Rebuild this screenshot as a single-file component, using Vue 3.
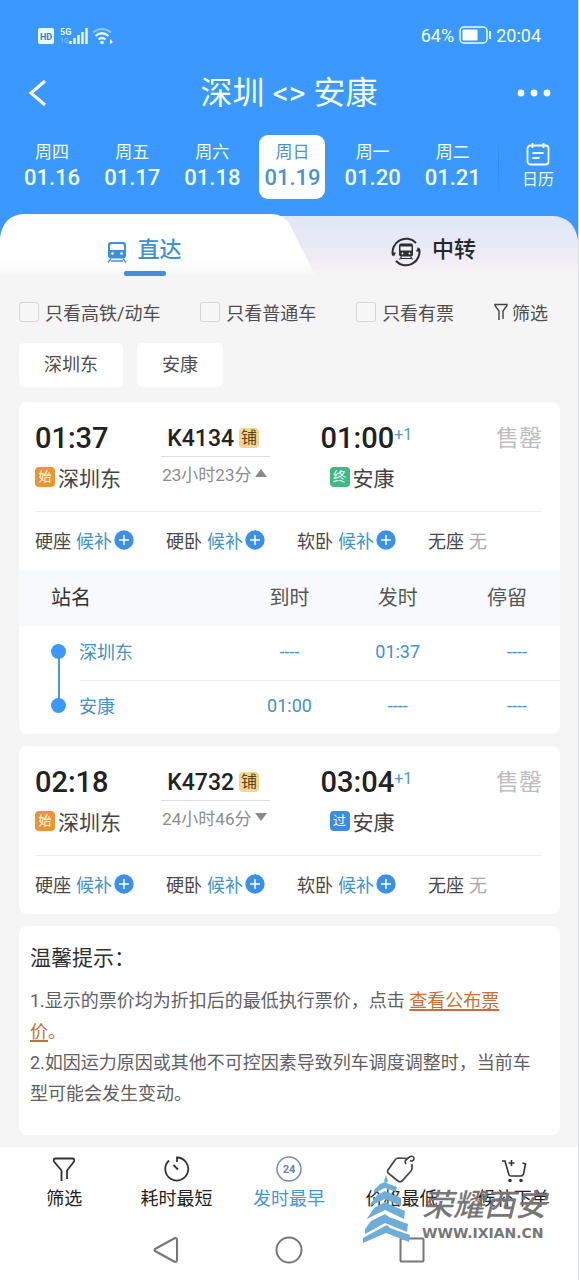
<script setup>
import { ref } from 'vue'

const days = [
  { week: '周四', date: '01.16' },
  { week: '周五', date: '01.17' },
  { week: '周六', date: '01.18' },
  { week: '周日', date: '01.19' },
  { week: '周一', date: '01.20' },
  { week: '周二', date: '01.21' },
]
const activeDay = ref('01.19')

const options = ref([
  { label: '只看高铁/动车', on: false },
  { label: '只看普通车', on: false },
  { label: '只看有票', on: false },
])

const seats = [
  { name: '硬座', wait: true },
  { name: '硬卧', wait: true },
  { name: '软卧', wait: true },
  { name: '无座', wait: false },
]

const trains = ref([
  {
    no: 'K4134', start: '01:37', end: '01:00', cost: '23小时23分', tag: '终', kind: 'last', open: true,
    stops: [
      { name: '深圳东', arrive: '----', leave: '01:37', stay: '----' },
      { name: '安康', arrive: '01:00', leave: '----', stay: '----' },
    ],
  },
  {
    no: 'K4732', start: '02:18', end: '03:04', cost: '24小时46分', tag: '过', kind: 'pass', open: false,
    stops: [],
  },
])
</script>

<template>
  <div class="page">
    <header class="top">
      <div class="status">
        <div class="status-left">
          <svg width="78" height="22" viewBox="0 0 78 22">
            <rect x="0" y="4" width="16" height="16" rx="2" fill="#e9fbff" />
            <text x="8" y="15.500" text-anchor="middle" class="hd">HD</text>
            <text x="22" y="11" class="five">5G</text>
            <text x="22" y="19" class="tiny">1G</text>
            <path d="M32.500 20v-3M36.500 20v-6M40.500 20v-9M44.500 20v-12M48.500 20v-16" stroke="#e9fbff" stroke-width="2.400" fill="none" />
            <path d="M55 8.500q9-7 18 0" stroke="#8ec6ff" stroke-width="2" fill="none" />
            <path d="M57.500 12q6.500-5.500 13 0M60.500 15.500q3.500-3 7 0" stroke="#e9fbff" stroke-width="2.200" fill="none" />
            <circle cx="64" cy="18.500" r="1.800" fill="#e9fbff" />
            <path d="M72 15v5l3-2z" fill="#e9fbff" />
          </svg>
        </div>
        <div class="status-right">
          <span>64%</span>
          <svg width="32" height="18" viewBox="0 0 32 18">
            <rect x="1" y="1" width="27" height="16" rx="4" fill="none" stroke="#e9fbff" stroke-width="1.500" />
            <rect x="3.500" y="3.500" width="15" height="11" rx="1" fill="#fff" />
            <path d="M31 5v8" stroke="#e9fbff" stroke-width="1.800" />
          </svg>
          <span>20:04</span>
        </div>
      </div>

      <div class="title-row">
        <button class="plain" aria-label="返回">
          <svg width="20" height="28" viewBox="0 0 20 28">
            <path d="M18 2 4 14l14 12" fill="none" stroke="#fff" stroke-width="3" />
          </svg>
        </button>
        <h1>深圳 &lt;&gt; 安康</h1>
        <button class="plain more" aria-label="更多">
          <svg width="34" height="8" viewBox="0 0 34 8" fill="#fff">
            <circle cx="4" cy="4" r="3.400" /><circle cx="17" cy="4" r="3.400" /><circle cx="30" cy="4" r="3.400" />
          </svg>
        </button>
      </div>

      <nav class="days">
        <div class="day-list">
          <button
            v-for="d in days" :key="d.date" class="plain day"
            :class="{ active: activeDay === d.date }" @click="activeDay = d.date"
          >
            <span class="week">{{ d.week }}</span>
            <span class="date">{{ d.date }}</span>
          </button>
        </div>
        <button class="plain calendar">
          <svg width="24" height="24" viewBox="0 0 24 24" fill="none" stroke="#fff" stroke-width="1.800">
            <rect x="1.500" y="3.500" width="21" height="19" rx="3" />
            <path d="M6.500 1v5M17.500 1v5M6.500 11h11M6.500 16h7" />
          </svg>
          <span>日历</span>
        </button>
      </nav>

      <div class="tabs">
        <svg class="tab-shape" viewBox="0 0 579 60" preserveAspectRatio="none">
          <defs>
            <linearGradient id="back" x1="0" y1="0" x2="0" y2="1">
              <stop offset="0" stop-color="#e2e8f6" />
              <stop offset=".5" stop-color="#e9e9f5" />
              <stop offset=".92" stop-color="#f6eff5" />
              <stop offset="1" stop-color="#f5f5f5" />
            </linearGradient>
            <linearGradient id="front" x1="0" y1="0" x2="0" y2="1">
              <stop offset=".75" stop-color="#fff" />
              <stop offset="1" stop-color="#f8f8f8" />
            </linearGradient>
          </defs>
          <path d="M200 2H554Q575 3 579 26V60H200z" fill="url(#back)" />
          <path d="M0 60V24Q3 1 24 0H272Q285 0 291 12L315 60z" fill="url(#front)" />
        </svg>
        <button class="plain tab current">
          <svg width="20" height="22" viewBox="0 0 20 22">
            <rect x="1" y="1" width="18" height="16.500" rx="3" fill="#3f8fe0" />
            <path d="M3 4.500Q3 3 5 3h10Q17 3 17 4.500V9H3z" fill="#fff" />
            <circle cx="5.500" cy="12.500" r="1.300" fill="#fff" /><circle cx="14.500" cy="12.500" r="1.300" fill="#fff" />
            <path d="M4 17.500 1 21.500M16 17.500l3 4M4 20h12" stroke="#3f8fe0" stroke-width="1.400" fill="none" />
          </svg>
          <span>直达</span>
        </button>
        <button class="plain tab">
          <svg width="30" height="30" viewBox="0 0 30 30">
            <path d="M2 18.500A13.500 13.500 0 0 1 25 6M28 11.500A13.500 13.500 0 0 1 5 24" fill="none" stroke="#2b2e33" stroke-width="2" />
            <path d="M.500 15.500h4.500L3 19.500zM25 14.500h4.500L27 10z" fill="#2b2e33" />
            <rect x="8" y="6.500" width="14" height="13" rx="2" fill="#2b2e33" />
            <path d="M9.500 9.500h11v4h-11z" fill="#f2f0f6" />
            <circle cx="11.500" cy="16.500" r="1" fill="#fff" /><circle cx="18.500" cy="16.500" r="1" fill="#fff" />
            <path d="m10.500 19.500-2 3M19.500 19.500l2 3M10 21.500h10" stroke="#2b2e33" stroke-width="1.200" fill="none" />
          </svg>
          <span>中转</span>
        </button>
      </div>
    </header>

    <main>
      <div class="filters">
        <label v-for="o in options" :key="o.label"><input v-model="o.on" type="checkbox">{{ o.label }}</label>
        <button class="plain sift">
          <svg width="14" height="18" viewBox="0 0 14 18" fill="none" stroke="#444" stroke-width="1.400">
            <path d="M5 17V8L1 2.500V1.500h12v1L9 8v8" />
          </svg>
          <span>筛选</span>
        </button>
      </div>

      <div class="chips">
        <button class="plain chip">深圳东</button>
        <button class="plain chip">安康</button>
      </div>

      <article v-for="t in trains" :key="t.no" class="card">
        <div class="summary">
          <div>
            <div class="time">{{ t.start }}</div>
            <div class="station"><span class="tag first">始</span>深圳东</div>
          </div>
          <div class="trip">
            <div class="number">{{ t.no }}<span class="tag berth">铺</span></div>
            <button class="plain cost" :aria-expanded="t.open" @click="t.open = !t.open">
              {{ t.cost }}
              <svg width="12" height="8" viewBox="0 0 12 8" fill="#8a8a8a">
                <path v-if="t.open" d="M6 0 12 8H0z" />
                <path v-else d="M0 0h12L6 8z" />
              </svg>
            </button>
          </div>
          <div>
            <div class="time">{{ t.end }}<sup>+1</sup></div>
            <div class="station goal"><span class="tag" :class="t.kind">{{ t.tag }}</span>安康</div>
          </div>
          <div class="sold">售罄</div>
        </div>
        <div class="seats">
          <div v-for="s in seats" :key="s.name" class="seat">
            <span>{{ s.name }}</span>
            <button v-if="s.wait" class="plain wait">
              候补
              <svg width="20" height="20" viewBox="0 0 20 20">
                <circle cx="10" cy="10" r="9.700" fill="#3b90ea" />
                <path d="M10 5v10M5 10h10" stroke="#fff" stroke-width="1.500" />
              </svg>
            </button>
            <span v-else class="none">无</span>
          </div>
        </div>
        <table v-if="t.open && t.stops.length">
          <thead>
            <tr><th class="name">站名</th><th>到时</th><th>发时</th><th class="stay">停留</th></tr>
          </thead>
          <tbody>
            <tr v-for="s in t.stops" :key="s.name">
              <td class="name"><div class="stop"><i class="dot"></i><span>{{ s.name }}</span></div></td>
              <td>{{ s.arrive }}</td><td>{{ s.leave }}</td><td class="stay">{{ s.stay }}</td>
            </tr>
          </tbody>
        </table>
      </article>

      <section class="card tips">
        <h2>温馨提示：</h2>
        <p>1.显示的票价均为折扣后的最低执行票价，点击 <a href="#">查看公布票<br>价</a><span class="stop-mark">。</span></p>
        <p>2.如因运力原因或其他不可控因素导致列车调度调整时，当前车<br>型可能会发生变动。</p>
      </section>
    </main>

    <footer>
      <nav class="sorts">
        <button class="plain sort">
          <svg width="26" height="28" viewBox="0 0 26 28" fill="none" stroke="#333" stroke-width="1.800">
            <path d="M10.500 26V15.500L3 6.500Q2 3.500 4.500 3.500h17Q24 3.500 23 6.500l-7 9V24" />
          </svg>
          <span>筛选</span>
        </button>
        <button class="plain sort">
          <svg width="26" height="28" viewBox="0 0 26 28" fill="none" stroke="#333" stroke-width="1.800">
            <path d="M13 7V2.500A11.500 11.500 0 1 1 5 5.500M9.500 10l4.500 4.500" />
          </svg>
          <span>耗时最短</span>
        </button>
        <button class="plain sort chosen">
          <svg width="26" height="28" viewBox="0 0 26 28">
            <circle cx="13" cy="14" r="12" fill="none" stroke="#7489c8" stroke-width="1.500" />
            <text x="13" y="18" text-anchor="middle" class="clock">24</text>
          </svg>
          <span>发时最早</span>
        </button>
        <button class="plain sort">
          <svg width="30" height="28" viewBox="0 0 30 28" fill="none" stroke="#444" stroke-width="1.700">
            <path d="M22 3.500 12 3Q10 3.500 9 5L2 15q-1 1.500 0 3l10 8q2 1.500 4 0l9-10q1-1 1-3V9" />
            <path d="M20 9q-2-3 1-5l3-2.500q4-1 4 2.500-1 3-4 1.500" />
          </svg>
          <span>价格最低</span>
        </button>
        <button class="plain sort">
          <svg width="26" height="28" viewBox="0 0 26 28" fill="none" stroke="#333" stroke-width="1.600">
            <path d="M1 6h3l4 14q.500 1 2 1h10q2 0 2.500-2l2-10-3-1M10.500 5v6M7.500 8h6" />
            <circle cx="9" cy="25.500" r="1" fill="#333" /><circle cx="20" cy="25.500" r="1" fill="#333" />
          </svg>
          <span>候补下单</span>
        </button>
      </nav>
      <div class="system">
        <button class="plain" aria-label="后退">
          <svg width="28" height="28" viewBox="0 0 28 28" fill="none" stroke="#777" stroke-width="2">
            <path d="M23 2 3 13q-1 1 0 2l20 11q2 0 2-2V4q0-2-2-2z" stroke-linejoin="round" />
          </svg>
        </button>
        <button class="plain" aria-label="主页">
          <svg width="28" height="28" viewBox="0 0 28 28" fill="none" stroke="#777" stroke-width="2"><circle cx="14" cy="14" r="12.500" /></svg>
        </button>
        <button class="plain" aria-label="任务">
          <svg width="28" height="28" viewBox="0 0 28 28" fill="none" stroke="#777" stroke-width="2"><rect x="2.500" y="2.500" width="23" height="23" rx="1" /></svg>
        </button>
      </div>
      <div class="brand">
        <svg width="48" height="68" viewBox="0 0 48 68" fill="#6fadd9">
          <path d="M23 0l2 6-2 2-2-2z" />
          <path d="M11 15 17 9l5-2 4 2 8 3-1 5-11-4-11 5z" />
          <path d="M8 28 14 20l8-4 4 2 12 5v8l-16-7-15 7z" />
          <path d="M5 42 11 33l11-6 4 2 16 7-1 8-19-9-18 9z" />
          <path d="M2 54 8 46l14-7 4 3 19 7-1 8-22-9L2 59z" />
          <path d="M0 63 20 52l4-2 3 3 20 7-1 7-23-9L0 68z" />
        </svg>
        <div>
          <strong>荣耀西安</strong>
          <em>WWW.IXIAN.CN</em>
        </div>
      </div>
    </footer>
  </div>
</template>

<style>
body { margin: 0; background: #f5f5f5; }
</style>

<style scoped>
.page {
  box-sizing: border-box;
  min-height: 100vh;
  border-right: 1px solid #dcdde0;
  background: #f5f5f5;
  color: #333;
  font-family: Roboto, "Noto Sans CJK SC", sans-serif;
  font-size: 18px;
}
.plain {
  margin: 0;
  padding: 0;
  border: 0;
  background: none;
  color: inherit;
  font: inherit;
  cursor: pointer;
}
svg { display: block; flex: none; }

.top { background: #3a98ff; color: #f2fdff; }
.status { display: flex; justify-content: space-between; align-items: center; height: 70px; padding: 0 37px 0 38px; }
.status-right { display: flex; align-items: center; gap: 5px; }
.hd { font: 700 9px Roboto, sans-serif; fill: #3a7fc8; }
.five { font: 700 9px Roboto, sans-serif; fill: #e9fbff; }
.tiny { font: 400 7px Roboto, sans-serif; fill: #8ec6ff; }
.title-row { display: grid; grid-template-columns: 1fr auto 1fr; align-items: center; height: 46px; padding: 0 27px; }
.more { justify-self: end; }
h1 { margin: 0; font-size: 32px; font-weight: 400; line-height: 46px; }
.days { display: flex; padding: 19px 0 15px 12px; }
.day-list { display: grid; flex: 6; grid-template-columns: repeat(6, 1fr); justify-items: center; }
.day {
  display: flex;
  flex-direction: column;
  align-items: center;
  box-sizing: border-box;
  width: 66px;
  height: 64px;
  padding-top: 5px;
  border-radius: 9px;
}
.week { font-size: 17px; line-height: 24px; }
.date { font-size: 22px; font-weight: 500; line-height: 28px; }
.day.active { background: #fff; color: #4b92cf; }
.calendar {
  display: flex;
  flex: 1;
  flex-direction: column;
  align-items: center;
  justify-content: center;
  gap: 2px;
  margin-left: 5px;
  background: linear-gradient(transparent, #3288ee, transparent) 0 0 / 1px 100% no-repeat;
  font-size: 16px;
  line-height: 24px;
}

.tabs { position: relative; display: grid; grid-template-columns: 1fr 1fr; height: 60px; }
.tab-shape { position: absolute; inset: 0; width: 100%; height: 100%; }
.tabs::before { content: ""; position: absolute; inset: 40px 0 0; background: #f5f5f5; }
.tab {
  position: relative;
  display: flex;
  align-items: center;
  justify-content: center;
  gap: 11px;
  height: 75px;
  color: #24272b;
  font-size: 22px;
  font-weight: 500;
}
.tab span { line-height: 32px; padding-bottom: 4px; }
.tab.current { gap: 10px; color: #428fd8; }
.tab.current::after {
  content: "";
  position: absolute;
  bottom: 13px;
  left: 50%;
  width: 42px;
  height: 5px;
  margin-left: -21px;
  border-radius: 2px;
  background: #418fdb;
}

main { display: flex; flex-direction: column; gap: 12px; padding: 23px 18px 12px 19px; }
.filters { display: flex; justify-content: space-between; align-items: center; height: 30px; padding-right: 12px; color: #4e4e4e; }
.filters label { display: flex; align-items: center; gap: 6px; }
.filters input {
  width: 20px;
  height: 20px;
  margin: 0;
  border: 1px solid #d6d6d6;
  border-radius: 3px;
  background: #f7f7f7;
  appearance: none;
}
.filters input:checked { background: #3a98ff; }
.sift { display: flex; align-items: center; gap: 4px; }
.chips { display: flex; gap: 14px; padding: 4px 0 3px; }
.chip { height: 44px; padding: 0 25px; border-radius: 5px; background: #fff; color: #4e4e4e; line-height: 42px; }

.card { overflow: hidden; border-radius: 8px; background: #fff; }
.summary {
  display: grid;
  grid-template-columns: 126fr 159fr 175fr 46fr;
  margin: 0 18px 0 16px;
  padding-top: 18px;
  height: 91px;
  border-bottom: 1px solid #eee;
}
.time { color: #222; font-size: 29px; font-weight: 500; line-height: 36px; white-space: nowrap; }
.time sup { color: #4b9bcb; font-size: 16px; font-weight: 400; line-height: 16px; vertical-align: 8px; }
.station { display: flex; align-items: center; gap: 3px; height: 42px; color: #444; font-size: 21px; white-space: nowrap; }
.station.goal { padding-left: 9px; }
.tag {
  width: 20px;
  height: 20px;
  border-radius: 4px;
  color: #fff;
  font-size: 13px;
  font-weight: 400;
  line-height: 19px;
  text-align: center;
}
.first { background: #ee9433; }
.last { background: #3dbb80; }
.pass { background: #3b8de3; }
.berth { background: #f4d491; color: #5a4213; font-size: 16px; }
.trip { width: 109px; }
.number {
  display: flex;
  align-items: center;
  gap: 5px;
  height: 36px;
  padding-left: 6px;
  border-bottom: 1px solid #ddd;
  color: #222;
  font-size: 23px;
  font-weight: 500;
}
.cost { display: flex; align-items: center; gap: 4px; height: 32px; padding-left: 1px; color: #8c8c8c; font-size: 17px; white-space: nowrap; }
.sold { color: #bdbdbd; font-size: 23px; line-height: 38px; white-space: nowrap; }
.seats { display: grid; grid-template-columns: 131fr 131fr 131fr 114fr; height: 56px; margin: 0 18px 0 16px; padding-bottom: 2px; }
.seat { display: flex; align-items: center; gap: 5px; color: #484848; white-space: nowrap; }
.wait { display: flex; align-items: center; gap: 2px; color: #4292ca; }
.none { color: #aaa; }

table { width: 100%; border-collapse: collapse; table-layout: fixed; text-align: center; }
th { height: 56px; padding: 0 0 4px; box-sizing: border-box; background: #f7f9fd; color: #555; font-size: 20px; font-weight: 400; }
td { height: 50px; padding: 0 0 4px; color: #4392c8; }
th.name { width: 40%; padding-left: 32px; color: #333; text-align: left; }
.name { text-align: left; }
.stay { padding-right: 33px; text-align: right; }
.stop { display: flex; align-items: center; gap: 13px; padding-left: 32px; }
.dot { position: relative; width: 15px; height: 15px; border-radius: 50%; background: #3a98ff; }
tbody tr:not(:last-child) .dot::after { content: ""; position: absolute; top: 14px; left: 7px; width: 2px; height: 42px; background: #4a9bd0; }
tbody tr + tr { background: linear-gradient(#eee, #eee) 61px 0 / 100% 1px no-repeat; }

.tips { padding: 16px 11px 26px; color: #606060; }
h2 { margin: 0 0 10px; color: #303030; font-size: 21px; font-weight: 400; line-height: 33px; }
p { margin: 0; line-height: 31px; white-space: nowrap; }
a { color: #cf6c31; text-decoration-thickness: 2px; text-underline-offset: 2px; }
.stop-mark { color: #cf6c31; }

footer { position: relative; background: #fff; }
.sorts { display: grid; grid-template-columns: repeat(5, 1fr); padding: 8px 8px 0; }
.sort { display: flex; flex-direction: column; align-items: center; gap: 2px; color: #222; line-height: 28px; }
.chosen { color: #4398cf; }
.clock { font: 700 11px Roboto, sans-serif; fill: #6a80c8; }
.system { display: flex; justify-content: center; gap: 95px; padding: 23px 0 16px; }
.brand { position: absolute; top: 28px; left: 363px; display: flex; align-items: flex-end; gap: 11px; color: #777; pointer-events: none; }
.brand strong { display: block; font-size: 31px; font-style: italic; font-weight: 500; line-height: 34px; }
.brand em { display: block; font: 700 14px/20px "DejaVu Sans", sans-serif; }
</style>
